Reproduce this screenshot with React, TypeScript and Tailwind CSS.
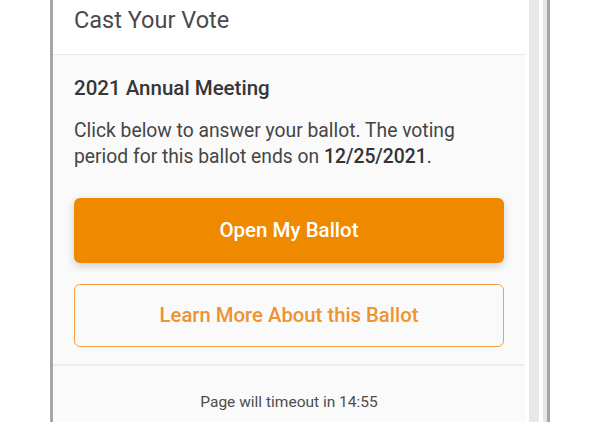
export default function App() {
  return (
    <div
      className="flex h-[422px] w-[608px] overflow-hidden bg-white"
      style={{ fontFamily: "Roboto, 'Liberation Sans', sans-serif" }}
    >
      <div className="ml-[50px] flex h-full w-[500px] border-x-[3px] border-[#a6a6a6]">
        <div className="flex w-[472px] flex-col">
          <div className="h-[55px] border-b border-[#e6e6e6] bg-white px-[21px] pt-[6px]">
            <h1 className="text-[23.5px] leading-[28px] text-[#4a4a4a]">
              Cast Your Vote
            </h1>
          </div>
          <div className="flex flex-col bg-[#fafafa] px-[21px] pt-[20px]">
            <h2 className="text-[20.5px] font-medium leading-[26px] text-[#363636]">
              2021 Annual Meeting
            </h2>
            <p className="mt-[17px] text-[19.3px] leading-[26px] text-[#454545]">
              Click below to answer your ballot. The voting period for this
              ballot ends on <span className="font-medium text-[#333]">12/25/2021</span>.
            </p>
            <button
              type="button"
              className="mt-[28px] h-[65px] w-full rounded-[6px] bg-[#ef8900] text-[20.5px] font-medium text-white shadow-[0_3px_8px_rgba(0,0,0,0.18)]"
            >
              Open My Ballot
            </button>
            <button
              type="button"
              className="mt-[21px] h-[63px] w-full rounded-[6px] border-[1.5px] border-[#f2a242] bg-transparent text-[20.3px] font-medium text-[#ef9230]"
            >
              Learn More About this Ballot
            </button>
            <div className="h-[17px]" />
          </div>
          <div className="flex flex-1 justify-center border-t-2 border-[#ececec] bg-[#fafafa] pt-[26px]">
            <span className="text-[15.5px] leading-[20px] text-[#4d4d4d]">
              Page will timeout in 14:55
            </span>
          </div>
        </div>
        <div className="w-[4px] bg-white" />
        <div className="w-[10px] bg-[#e8e8e8]" />
        <div className="w-[4px] bg-white" />
        <div className="w-[4px] bg-[#e6e6e6]" />
      </div>
    </div>
  );
}
